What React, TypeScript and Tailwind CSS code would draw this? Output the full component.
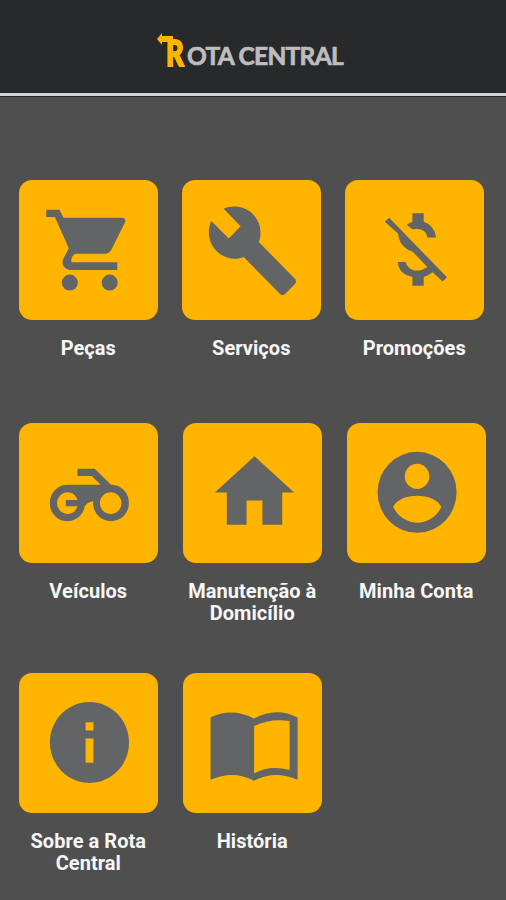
import type { ReactNode } from "react";
import { MdBuild, MdHome, MdInfo } from "react-icons/md";

function TileIcon({ children }: { children: ReactNode }) {
  return (
    <svg viewBox="0 0 420 420" className="h-full w-full" fill="currentColor" fillRule="evenodd">
      {children}
    </svg>
  );
}

function CartIcon() {
  return (
    <TileIcon>
      <g transform="translate(-26 -29)">
        <path d="M108 118H148L160 142H337Q348 144 346 154L304 238Q297 250 284 250H194Q180 262 184 276H322V299H178Q152 292 158 268L176 234L134 140H108Z" />
        <circle cx="179" cy="337" r="24" />
        <circle cx="299" cy="337" r="24" />
      </g>
    </TileIcon>
  );
}

function MoneyOffIcon() {
  return (
    <TileIcon>
      <g transform="translate(-27 -30)">
        <path d="M230 129H264V155Q297 166 301 202H275C273 181 253 173 231 178L213 165Q220 158 230 155Z" />
        <path d="M160 143L334 322L321 335L291 307Q280 316 264 321V348H230V321Q188 312 186 276H210C215 302 248 311 275 291L231 245Q191 232 187 191L147 155Z" />
      </g>
    </TileIcon>
  );
}

function MotorcycleIcon() {
  return (
    <TileIcon>
      <path
        transform="translate(-27 -23)"
        d="M203 160H255L304 208A54 55 0 1 1 250 263V257L234 263L225 272A53 55 0 1 1 173 208H273L246 182H203ZM303 231a32 32 0 1 0 0 65a32 32 0 1 0 0-65ZM174 231a32 32 0 1 0 0 65C188 296 198 288 203 273H168V254H203C198 240 188 231 174 231Z"
      />
    </TileIcon>
  );
}

function AccountIcon() {
  return (
    <TileIcon>
      <path
        transform="translate(-33 -24)"
        d="M244 110a119 122 0 1 0 0 244a119 122 0 1 0 0-244ZM244 146a37 38 0 1 1 0 76a37 38 0 1 1 0-76ZM172 276C192 231 296 231 317 276C286 339 204 339 172 276Z"
      />
    </TileIcon>
  );
}

function BookIcon() {
  return (
    <TileIcon>
      <path
        transform="translate(-24 -24)"
        d="M107 157Q170 126 238 160Q305 124 369 157V345Q300 314 238 348Q175 314 107 345ZM238 183V326Q285 300 345 315V168Q290 158 238 183Z"
      />
    </TileIcon>
  );
}

function Logo() {
  return (
    <div className="relative flex h-[36px] w-[187px] items-end leading-none">
      <svg viewBox="0 0 16 12" className="absolute top-[3px] left-0 h-[12px] w-[16px]" fill="#ffb400">
        <path d="M0 6L5 0V3H16V9H5V12Z" />
      </svg>
      <span className="mb-[-1px] ml-[9px] w-[21.5px] origin-left scale-x-[0.76] font-['Lato',sans-serif] text-[36px] leading-[30px] font-black text-[#ffb400] [-webkit-text-stroke:1.8px_#ffb400]">
        R
      </span>
      <span className="mb-[-3px] font-['Lato',sans-serif] text-[24.5px] leading-[26px] font-bold tracking-[-0.7px] whitespace-nowrap text-[#bdbdbf] [-webkit-text-stroke:0.7px_#bdbdbf]">
        OTA CENTRAL
      </span>
    </div>
  );
}

function MenuItem({ label, children }: { label: string; children: ReactNode }) {
  return (
    <div className="flex flex-col items-center">
      <div className="flex h-[140px] w-[139.5px] items-center justify-center rounded-[13px] bg-[#ffb400] text-[#636466]">
        {children}
      </div>
      <p className="mt-[17px] w-[139.5px] text-center text-[20px] leading-[22px] font-bold tracking-[0.05px] text-[#f7f7f7]">
        {label}
      </p>
    </div>
  );
}

export default function App() {
  return (
    <div className="h-[900px] w-[506px] overflow-hidden bg-[#4f4f4f] font-['Roboto',sans-serif]">
      <header className="flex h-[97px] flex-col bg-[#27292b]">
        <div className="flex h-[93px] items-start justify-center pt-[30px] pr-[6px]">
          <Logo />
        </div>
        <div className="h-[3px] bg-[#d2d2d2]" />
      </header>
      <main className="mt-[83px] px-[18.5px]">
        <div className="flex gap-[23.5px]">
          <MenuItem label="Peças"><CartIcon /></MenuItem>
          <MenuItem label="Serviços"><MdBuild className="ml-[2px] h-[97px] w-[95px]" preserveAspectRatio="none" /></MenuItem>
          <MenuItem label="Promoções"><MoneyOffIcon /></MenuItem>
        </div>
        <div className="mt-[63.5px] flex gap-[24.5px]">
          <MenuItem label="Veículos"><MotorcycleIcon /></MenuItem>
          <MenuItem label="Manutenção à Domicílio"><MdHome className="ml-[4px] h-[97px] w-[95px]" preserveAspectRatio="none" /></MenuItem>
          <MenuItem label="Minha Conta"><AccountIcon /></MenuItem>
        </div>
        <div className="mt-[49px] flex gap-[24.5px]">
          <MenuItem label="Sobre a Rota Central"><MdInfo className="ml-[2px] h-[97px] w-[95px]" preserveAspectRatio="none" /></MenuItem>
          <MenuItem label="História"><BookIcon /></MenuItem>
        </div>
      </main>
    </div>
  );
}
